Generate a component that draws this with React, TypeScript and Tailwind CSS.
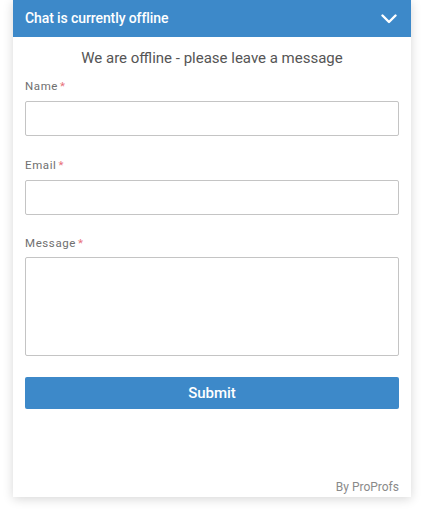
export default function App() {
  const font = { fontFamily: "Roboto, 'Liberation Sans', sans-serif" };
  return (
    <div className="w-[422px] h-[510px] bg-white" style={font}>
      <div className="ml-[13px] w-[398px] h-[497px] bg-white flex flex-col shadow-[0_2px_10px_rgba(0,0,0,0.16)]">
        <div className="h-[37px] bg-[#3d89c9] flex items-center justify-between pl-[12px] pr-[14px]">
          <span className="text-white text-[14px] font-medium tracking-[-0.1px]">Chat is currently offline</span>
          <svg width="16" height="10" viewBox="0 0 16 10" fill="none">
            <path d="M1.5 1.5 L8 8 L14.5 1.5" stroke="white" strokeWidth="2.4" strokeLinecap="round" strokeLinejoin="round" />
          </svg>
        </div>
        <div className="px-[12px] flex flex-col flex-1">
          <p className="text-center text-[15px] text-[#555] mt-[12px] leading-[18px]">
            We are offline - please leave a message
          </p>
          <label className="mt-[12px] text-[11.5px] text-[#6f6f6f] leading-[14px] tracking-[0.6px]">
            Name<span className="ml-[2px] text-[#e8707a]">*</span>
          </label>
          <input className="mt-[8px] h-[35px] border border-[#c4c4c4] rounded-[2px] outline-none" />
          <label className="mt-[22px] text-[11.5px] text-[#6f6f6f] leading-[14px] tracking-[0.6px]">
            Email<span className="ml-[2px] text-[#e8707a]">*</span>
          </label>
          <input className="mt-[8px] h-[35px] border border-[#c4c4c4] rounded-[2px] outline-none" />
          <label className="mt-[21px] text-[11.5px] text-[#6f6f6f] leading-[14px] tracking-[0.6px]">
            Message<span className="ml-[2px] text-[#e8707a]">*</span>
          </label>
          <textarea className="mt-[7px] h-[99px] border border-[#c4c4c4] rounded-[2px] outline-none resize-none" />
          <button className="mt-[21px] h-[32px] bg-[#3d89c9] text-white text-[15px] font-medium rounded-[2px]">
            Submit
          </button>
          <div className="mt-auto mb-[1px] text-right text-[12px] text-[#8a8a8a]">By ProProfs</div>
        </div>
      </div>
    </div>
  );
}
